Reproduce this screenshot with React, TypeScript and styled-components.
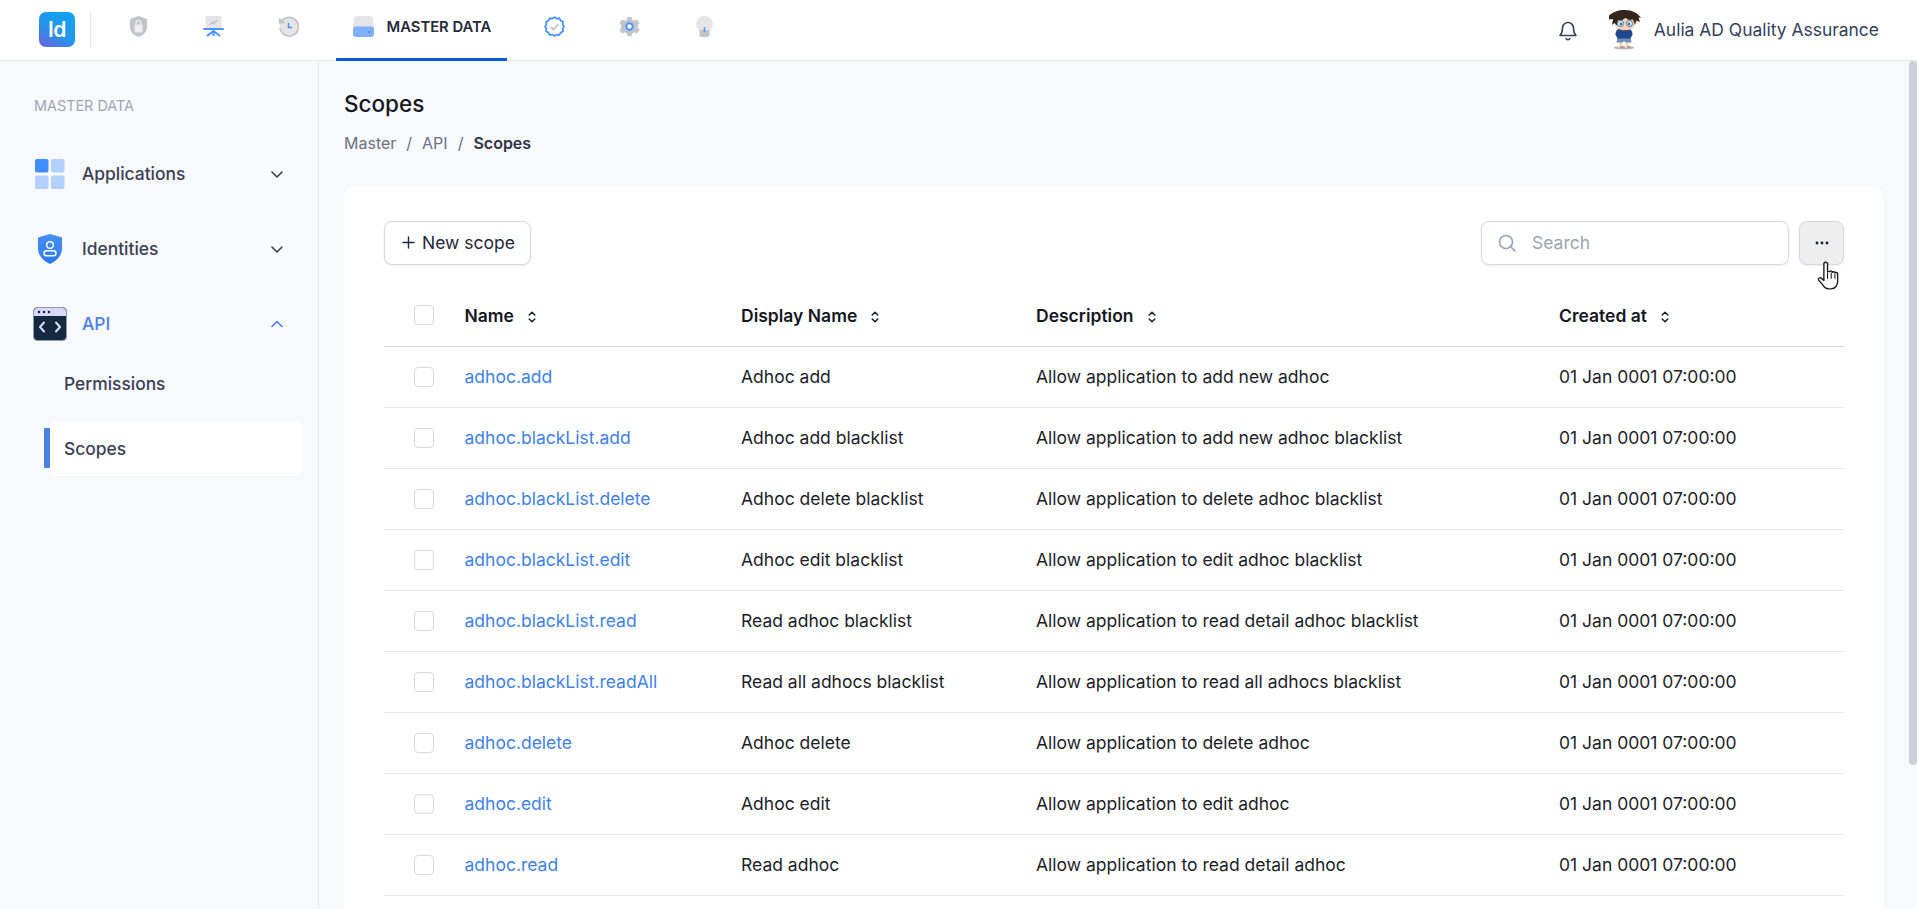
import React from "react";
import styled, { createGlobalStyle } from "styled-components";

const Global = createGlobalStyle`
  html, body { margin: 0; padding: 0; height: 100%; overflow: hidden; background: #f8f9fb; }
  body { font-family: Inter, "Liberation Sans", sans-serif; color: #181c32; }
  #root { height: 100%; }
  * { box-sizing: border-box; }
`;

const Shell = styled.div`
  display: flex;
  flex-direction: column;
  height: 909px;
`;

const TopBar = styled.header`
  flex: none;
  height: 61px;
  display: flex;
  align-items: stretch;
  background: #fff;
  border-bottom: 1px solid #e9eaee;
`;

const Logo = styled.div`
  flex: none;
  align-self: center;
  width: 36px;
  height: 35px;
  margin: 0 15px 1px 39px;
  display: flex;
  align-items: center;
  justify-content: center;
  border-radius: 7px;
  background: linear-gradient(215deg, #0fa6f2 0%, #1f97ee 50%, #6a64d8 100%);
  color: #fff;
  font-size: 21px;
  font-weight: 600;
  letter-spacing: -0.5px;
`;

const Separator = styled.div`
  flex: none;
  align-self: center;
  width: 1px;
  height: 37px;
  margin: 0 9.5px 1px 0;
  background: #e4e5ea;
`;

const NavItem = styled.div<{ $active?: boolean }>`
  flex: none;
  display: flex;
  align-items: center;
  height: 61px;
  padding: ${(p) => (p.$active ? "0 16px 5px 17px" : "0 27px 5px")};
  margin: ${(p) => (p.$active ? "0 10px -1px" : "0")};
  gap: 13px;
  border-bottom: ${(p) => (p.$active ? "3px solid #0b5ad9" : "3px solid transparent")};
  color: #252a3a;
  font-size: 14.8px;
  font-weight: 600;
  white-space: nowrap;
`;

const NavIcon = styled.svg`
  flex: none;
  width: 21px;
  height: 21px;
  display: block;
`;

const TopRight = styled.div`
  margin-left: auto;
  display: flex;
  align-items: center;
  padding: 0 38px 1px 0;
`;

const Bell = styled.svg`
  width: 24px;
  height: 24px;
  margin-right: 27px;
  color: #3f4254;
  fill: none;
  stroke: currentColor;
  stroke-width: 1.6;
  stroke-linecap: round;
  stroke-linejoin: round;
`;

const Avatar = styled.svg`
  width: 36px;
  height: 40px;
  margin-right: 11px;
`;

const UserName = styled.span`
  font-size: 17.45px;
  color: #34405a;
  white-space: nowrap;
`;

const Body = styled.div`
  flex: 1;
  min-height: 0;
  display: flex;
`;

const Sidebar = styled.aside`
  flex: none;
  width: 319px;
  padding: 36px 15px 0 34px;
  background: #f8f9fb;
  border-right: 1px solid #e6e7ec;
`;

const SideLabel = styled.div`
  font-size: 14.4px;
  line-height: 18px;
  color: #a1a5b7;
  margin-bottom: 21px;
`;

const SideItem = styled.div<{ $open?: boolean }>`
  display: flex;
  align-items: center;
  height: 75px;
  color: ${(p) => (p.$open ? "#4a7fe8" : "#3a3f55")};
  font-size: 17.4px;
  font-weight: 500;
`;

const SideIcon = styled.svg`
  flex: none;
  width: 34px;
  height: 34px;
  margin: 0 15px 0 -1px;
`;

const SideText = styled.span`
  flex: 1;
`;

const Chevron = styled.svg`
  flex: none;
  width: 14px;
  height: 14px;
  margin-right: 19px;
  fill: none;
  stroke: currentColor;
  stroke-width: 1.6;
  stroke-linecap: round;
  stroke-linejoin: round;
`;

const SubList = styled.div`
  display: flex;
  flex-direction: column;
  margin: -5px 0 0 14px;
`;

const SubItem = styled.div<{ $active?: boolean }>`
  position: relative;
  display: flex;
  align-items: center;
  height: 55px;
  margin-top: ${(p) => (p.$active ? "10px" : "0")};
  padding-left: 16px;
  border-radius: 8px;
  background: ${(p) => (p.$active ? "#fff" : "transparent")};
  color: #3a3f55;
  font-size: 17.4px;
  font-weight: 500;
  &::before {
    content: "";
    display: ${(p) => (p.$active ? "block" : "none")};
    position: absolute;
    left: -4px;
    top: 7px;
    width: 6px;
    height: 40px;
    border-radius: 1px;
    background: #4a7fe8;
  }
`;

const Main = styled.main`
  position: relative;
  flex: 1;
  min-width: 0;
  overflow: hidden;
  padding: 0 33px 0 25px;
`;

const ScrollThumb = styled.div`
  position: absolute;
  top: 0;
  right: 0;
  width: 8px;
  height: 704px;
  border-radius: 4px;
  background: #cbd0da;
`;

const Title = styled.h1`
  margin: 29px 0 0;
  font-size: 22.5px;
  line-height: 28px;
  font-weight: 500;
  color: #14171f;
`;

const Crumbs = styled.nav`
  display: flex;
  gap: 10px;
  margin-top: 15px;
  font-size: 16px;
  line-height: 20px;
  color: #6d7183;
`;

const CrumbCurrent = styled.span`
  color: #2e3346;
  font-weight: 600;
`;

const Card = styled.section`
  margin-top: 33px;
  padding: 35px 40px 160px;
  background: #fff;
  border-radius: 12px;
`;

const Toolbar = styled.div`
  display: flex;
  align-items: center;
  gap: 10px;
  margin-bottom: 20px;
`;

const NewButton = styled.button`
  display: flex;
  align-items: center;
  gap: 7px;
  height: 44px;
  width: 147px;
  padding: 0 0 1px 17px;
  background: #fff;
  border: 1px solid #d8d9e0;
  border-radius: 8px;
  box-shadow: 0 1px 2px rgba(16, 24, 40, 0.08);
  color: #252a3a;
  font: 400 17.5px Inter, sans-serif;
`;

const SearchBox = styled.label`
  margin-left: auto;
  display: flex;
  align-items: center;
  gap: 15px;
  width: 308px;
  height: 44px;
  padding: 0 0 1px 15px;
  border: 1px solid #d8d9e0;
  border-radius: 8px;
  box-shadow: 0 1px 2px rgba(16, 24, 40, 0.08);
  color: #9ea3b3;
  font-size: 17.5px;
`;

const SearchIcon = styled.svg`
  width: 20px;
  height: 20px;
  fill: none;
  stroke: currentColor;
  stroke-width: 1.7;
  stroke-linecap: round;
`;

const MoreButton = styled.button`
  position: relative;
  display: flex;
  align-items: center;
  justify-content: center;
  width: 45px;
  height: 44px;
  padding: 0;
  background: #eeeeef;
  border: 1px solid #d8d9e0;
  border-radius: 8px;
  box-shadow: 0 1px 2px rgba(16, 24, 40, 0.08);
`;

const Dots = styled.svg`
  width: 14px;
  height: 4px;
`;

const HandCursor = styled.svg`
  position: absolute;
  left: 17px;
  top: 39px;
  width: 22px;
  height: 30px;
`;

const Table = styled.table`
  width: 100%;
  border-collapse: collapse;
  table-layout: fixed;
  font-size: 17.5px;
`;

const HeadCell = styled.th<{ $w: number }>`
  width: ${(p) => p.$w}px;
  height: 61px;
  padding: 0;
  border-bottom: 1px solid #d6d7de;
  text-align: left;
  font-weight: 600;
  color: #14171f;
  white-space: nowrap;
`;

const Row = styled.tr`
  height: 61px;
`;

const Cell = styled.td`
  padding: 0;
  border-bottom: 1px solid #e8e9ee;
  color: #1b1e28;
  white-space: nowrap;
`;

const LinkCell = styled(Cell)`
  color: #3f82e4;
`;

const Check = styled.span`
  display: block;
  width: 20px;
  height: 20px;
  margin-left: 30px;
  border: 1px solid #d9dae1;
  border-radius: 4px;
  background: #fff;
`;

const Sort = styled.svg`
  display: inline-block;
  width: 8px;
  height: 12px;
  margin-left: 14px;
  vertical-align: -1px;
  fill: none;
  stroke: #1b1e28;
  stroke-width: 1.5;
  stroke-linecap: round;
  stroke-linejoin: round;
`;

const SortIcon = () => (
  <Sort viewBox="0 0 8 12">
    <path d="M1.2 4 4 1.2 6.8 4M1.2 8 4 10.8 6.8 8" />
  </Sort>
);

const rows = [
  ["adhoc.add", "Adhoc add", "Allow application to add new adhoc"],
  ["adhoc.blackList.add", "Adhoc add blacklist", "Allow application to add new adhoc blacklist"],
  ["adhoc.blackList.delete", "Adhoc delete blacklist", "Allow application to delete adhoc blacklist"],
  ["adhoc.blackList.edit", "Adhoc edit blacklist", "Allow application to edit adhoc blacklist"],
  ["adhoc.blackList.read", "Read adhoc blacklist", "Allow application to read detail adhoc blacklist"],
  ["adhoc.blackList.readAll", "Read all adhocs blacklist", "Allow application to read all adhocs blacklist"],
  ["adhoc.delete", "Adhoc delete", "Allow application to delete adhoc"],
  ["adhoc.edit", "Adhoc edit", "Allow application to edit adhoc"],
  ["adhoc.read", "Read adhoc", "Allow application to read detail adhoc"],
];

const GREY = "#c3c4ca";
const LIGHT = "#e5e5e8";
const BLUE = "#4a93ff";

export default function App() {
  return (
    <Shell>
      <Global />
      <TopBar>
        <Logo>Id</Logo>
        <Separator />
        <NavItem>
          <NavIcon viewBox="0 0 21 21">
            <path fill={GREY} d="M10.500 0 2 3v8c0 5 4 8.500 8.500 10C15 19.500 19 16 19 11V3z" />
            <path fill="#eeeef0" d="M6.500 8.500h8v6.500a1.500 1.500 0 0 1-1.500 1.500H8A1.500 1.500 0 0 1 6.500 15z" />
            <path fill="none" stroke="#eeeef0" strokeWidth="1.300" d="M8 8.500V7a2.500 2.500 0 0 1 5 0v1.500" />
          </NavIcon>
        </NavItem>
        <NavItem>
          <NavIcon viewBox="0 0 21 21">
            <rect x="2.500" width="16" height="12" fill={LIGHT} />
            <path fill="none" stroke={GREY} strokeWidth="1.500" d="M6.500 9 9.500 6l1 2 3.500-4" />
            <rect y="12" width="21" height="2" rx="1" fill={BLUE} />
            <path stroke={BLUE} strokeWidth="2" d="M10.500 14v6M4 20l6.500-5 6.500 5" fill="none" />
          </NavIcon>
        </NavItem>
        <NavItem>
          <NavIcon viewBox="0 0 21 21">
            <circle cx="11" cy="11" r="9.500" fill={LIGHT} />
            <path fill="none" stroke={GREY} strokeWidth="1.700" d="M3.500 5.500A9.300 9.300 0 1 1 2 12" />
            <path fill={GREY} d="M1 1.500 7.500 7 1 8z" />
            <path fill="none" stroke={BLUE} strokeWidth="1.500" d="M10.500 7v4.500H14" />
          </NavIcon>
        </NavItem>
        <NavItem $active>
          <NavIcon viewBox="0 0 21 21">
            <path fill={LIGHT} d="M4 0h13a3 3 0 0 1 3 3l1 8H0l1-8a3 3 0 0 1 3-3z" />
            <path fill="#7fb0fb" d="M3 10.500h15a3 3 0 0 1 3 3V18a3 3 0 0 1-3 3H3a3 3 0 0 1-3-3v-4.500a3 3 0 0 1 3-3z" />
            <circle cx="16.500" cy="16" r="1" fill="#3f7fe0" />
          </NavIcon>
          MASTER DATA
        </NavItem>
        <NavItem>
          <NavIcon viewBox="0 0 21 21">
            <path
              fill="#fff"
              stroke={BLUE}
              strokeWidth="1.800"
              d="M10.500 1.300l2.300 1.300 2.600-.3 1.300 2.300 2.300 1.300-.3 2.600 1.300 2-1.300 2.200.3 2.600-2.300 1.300-1.300 2.300-2.600-.3-2.300 1.300-2.200-1.300-2.600.3-1.300-2.300-2.300-1.300.3-2.600-1.300-2.200 1.300-2-.3-2.600 2.300-1.300 1.300-2.300 2.600.3z"
            />
            <path fill="none" stroke={GREY} strokeWidth="1.800" d="M6.800 10.800l2.600 2.600 5-5" />
          </NavIcon>
        </NavItem>
        <NavItem>
          <NavIcon viewBox="0 0 21 21">
            <path
              fill={GREY}
              d="M8.500 0h4l.7 2.800 2.200 1L18 2.500l2.500 3.400-1.700 2.300v2.600l1.700 2.300-2.500 3.400-2.600-1.300-2.200 1-.7 2.800h-4l-.7-2.800-2.200-1L3 16.500.500 13.100l1.700-2.300V8.200L.500 5.900 3 2.500l2.600 1.300 2.200-1z"
              transform="translate(0 1)"
            />
            <circle cx="10.500" cy="10.500" r="3.200" fill="#fff" stroke={BLUE} strokeWidth="2" />
          </NavIcon>
        </NavItem>
        <NavItem>
          <NavIcon viewBox="0 0 21 21">
            <path fill={LIGHT} d="M10.500 0a8.300 8.300 0 0 1 5.300 14.700V15H5.200v-.3A8.300 8.300 0 0 1 10.500 0z" />
            <path fill={GREY} d="M5.500 14h10v4.500a2.500 2.500 0 0 1-2.500 2.500H8a2.500 2.500 0 0 1-2.500-2.500z" />
            <rect x="9.700" y="11" width="1.600" height="5" rx=".8" fill={BLUE} />
          </NavIcon>
        </NavItem>
        <TopRight>
          <Bell viewBox="0 0 24 24">
            <path d="M6.500 10a5.500 5.500 0 0 1 11 0c0 5 1.500 6.500 2.500 7.500H4c1-1 2.500-2.500 2.500-7.500z" />
            <path d="M10 20.500a2.200 2.200 0 0 0 4 0" />
          </Bell>
          <Avatar viewBox="0 0 36 40">
            <ellipse cx="17" cy="37.800" rx="10" ry="1.700" fill="#b5b5b5" />
            <path fill="#f0efef" d="M11 35.500h5.500v2H11zM18 35.500h5.500v2H18z" />
            <path fill="#a8423a" d="M13 36.500h3.500v1H13zM20 36.500h3.500v1H20z" />
            <rect x="12.500" y="31" width="3" height="5" fill="#f2d3b3" />
            <rect x="18.500" y="31" width="3" height="5" fill="#f2d3b3" />
            <path fill="#6d8fb4" d="M10.500 27h13l1 5.500h-6l-1.500-1.500-1.500 1.500h-6z" />
            <path fill="#1f468f" d="M12 19h10c2 0 3.500 3 3.500 5.500L23.500 28.500h-13L8.500 24.500C8.500 22 10 19 12 19z" />
            <path fill="#c13b2c" d="M14.500 19l2.500 1 2.500-1v2.200l-2.500-1-2.500 1z" />
            <path fill="#f4d6b6" d="M8 9h20v6c0 3-4.500 5-10 5s-10-2-10-5z" />
            <path fill="#33241c" d="M2 5.500C6 2 11 0 18 0c7 0 13 3 16 8l-2.500-.5L33 12l-3.500-1.500L28 15l-2-5.500-4 .5-3.500-2-4 2.500-3.500-.5L10 15.500 7.500 13 5 15l1-6-4 .5z" />
            <circle cx="13.500" cy="13.500" r="3.100" fill="#d4e8f5" stroke="#4f6f92" strokeWidth=".9" />
            <circle cx="22.500" cy="13.500" r="3.100" fill="#d4e8f5" stroke="#4f6f92" strokeWidth=".9" />
            <circle cx="14" cy="14" r="1.200" fill="#2f5f9b" />
            <circle cx="22" cy="14" r="1.200" fill="#2f5f9b" />
          </Avatar>
          <UserName>Aulia AD Quality Assurance</UserName>
        </TopRight>
      </TopBar>
      <Body>
        <Sidebar>
          <SideLabel>MASTER DATA</SideLabel>
          <SideItem>
            <SideIcon viewBox="0 0 34 34">
              <rect x="2" y="2" width="13.500" height="13.500" rx="2" fill="#3f8dff" />
              <rect x="18" y="2" width="13.500" height="13.500" rx="2" fill="#b3d0ff" />
              <rect x="2" y="18.500" width="13.500" height="13.500" rx="2" fill="#b3d0ff" />
              <rect x="18" y="18.500" width="13.500" height="13.500" rx="2" fill="#b3d0ff" />
            </SideIcon>
            <SideText>Applications</SideText>
            <Chevron viewBox="0 0 14 14">
              <path d="M2 5l5 5 5-5" />
            </Chevron>
          </SideItem>
          <SideItem>
            <SideIcon viewBox="0 0 34 34">
              <defs>
                <linearGradient id="sh" x1="0" y1="0" x2="0" y2="1">
                  <stop offset="0" stopColor="#4590f7" />
                  <stop offset="1" stopColor="#2f77e8" />
                </linearGradient>
              </defs>
              <path fill="url(#sh)" d="M17 2l12 3.500v11C29 24 23 29 17 32 11 29 5 24 5 16.500v-11z" />
              <circle cx="17" cy="13" r="3.300" fill="none" stroke="#fff" strokeWidth="1.400" />
              <rect x="11" y="18.800" width="12" height="5" rx="2.500" fill="none" stroke="#fff" strokeWidth="1.400" />
            </SideIcon>
            <SideText>Identities</SideText>
            <Chevron viewBox="0 0 14 14">
              <path d="M2 5l5 5 5-5" />
            </Chevron>
          </SideItem>
          <SideItem $open>
            <SideIcon viewBox="0 0 34 34">
              <rect x=".5" y=".5" width="33" height="33" rx="4" fill="#14293f" stroke="#8f99ad" />
              <path d="M1 9V5a4 4 0 0 1 4-4h24a4 4 0 0 1 4 4v4z" fill="#d9d8fa" />
              <circle cx="6" cy="5" r="1.300" fill="#14293f" />
              <circle cx="11" cy="5" r="1.300" fill="#14293f" />
              <circle cx="16" cy="5" r="1.300" fill="#14293f" />
              <path d="M11 15.500l-4 4.500 4 4.500M23 15.500l4 4.500-4 4.500" fill="none" stroke="#d9dff0" strokeWidth="2" strokeLinecap="round" strokeLinejoin="round" />
            </SideIcon>
            <SideText>API</SideText>
            <Chevron viewBox="0 0 14 14">
              <path d="M2 9.500l5-5 5 5" />
            </Chevron>
          </SideItem>
          <SubList>
            <SubItem>Permissions</SubItem>
            <SubItem $active>Scopes</SubItem>
          </SubList>
        </Sidebar>
        <Main>
          <ScrollThumb />
          <Title>Scopes</Title>
          <Crumbs>
            <span>Master</span>
            <span>/</span>
            <span>API</span>
            <span>/</span>
            <CrumbCurrent>Scopes</CrumbCurrent>
          </Crumbs>
          <Card>
            <Toolbar>
              <NewButton>
                <svg width="13" height="13" viewBox="0 0 13 13" stroke="#252a3a" strokeWidth="1.400" strokeLinecap="round">
                  <path d="M6.500 1v11M1 6.500h11" />
                </svg>
                New scope
              </NewButton>
              <SearchBox>
                <SearchIcon viewBox="0 0 20 20">
                  <circle cx="9" cy="9" r="6.500" />
                  <path d="M14 14l4 4" />
                </SearchIcon>
                Search
              </SearchBox>
              <MoreButton aria-label="More">
                <Dots viewBox="0 0 14 4" fill="#1b1e28">
                  <circle cx="2" cy="2" r="1.400" />
                  <circle cx="7" cy="2" r="1.400" />
                  <circle cx="12" cy="2" r="1.400" />
                </Dots>
                <HandCursor viewBox="0 0 24 32">
                  <path
                    fill="#fff"
                    stroke="#1a1a1a"
                    strokeWidth="1.500"
                    strokeLinejoin="round"
                    d="M7.500 3a2 2 0 0 1 4 0v8l2 .2a1.700 1.700 0 0 1 3 .3l.2.500a1.700 1.700 0 0 1 3 .5 1.700 1.700 0 0 1 2.800 1V22c0 4-2.500 8-7 8h-3c-3 0-4.500-1.500-6-4L1.800 20.500c-1-2 1.200-3.500 2.700-2.200L7.500 21z"
                  />
                  <path stroke="#1a1a1a" strokeWidth="1.200" d="M11.500 12v7M15.500 12.500V19M19.500 13.500V19" fill="none" />
                </HandCursor>
              </MoreButton>
            </Toolbar>
            <Table>
              <thead>
                <tr>
                  <HeadCell $w={80.5}>
                    <Check />
                  </HeadCell>
                  <HeadCell $w={276.5}>
                    Name
                    <SortIcon />
                  </HeadCell>
                  <HeadCell $w={295}>
                    Display Name
                    <SortIcon />
                  </HeadCell>
                  <HeadCell $w={523}>
                    Description
                    <SortIcon />
                  </HeadCell>
                  <HeadCell $w={285}>
                    Created at
                    <SortIcon />
                  </HeadCell>
                </tr>
              </thead>
              <tbody>
                {rows.map(([name, display, desc]) => (
                  <Row key={name}>
                    <Cell>
                      <Check />
                    </Cell>
                    <LinkCell>{name}</LinkCell>
                    <Cell>{display}</Cell>
                    <Cell>{desc}</Cell>
                    <Cell>01 Jan 0001 07:00:00</Cell>
                  </Row>
                ))}
              </tbody>
            </Table>
          </Card>
        </Main>
      </Body>
    </Shell>
  );
}
